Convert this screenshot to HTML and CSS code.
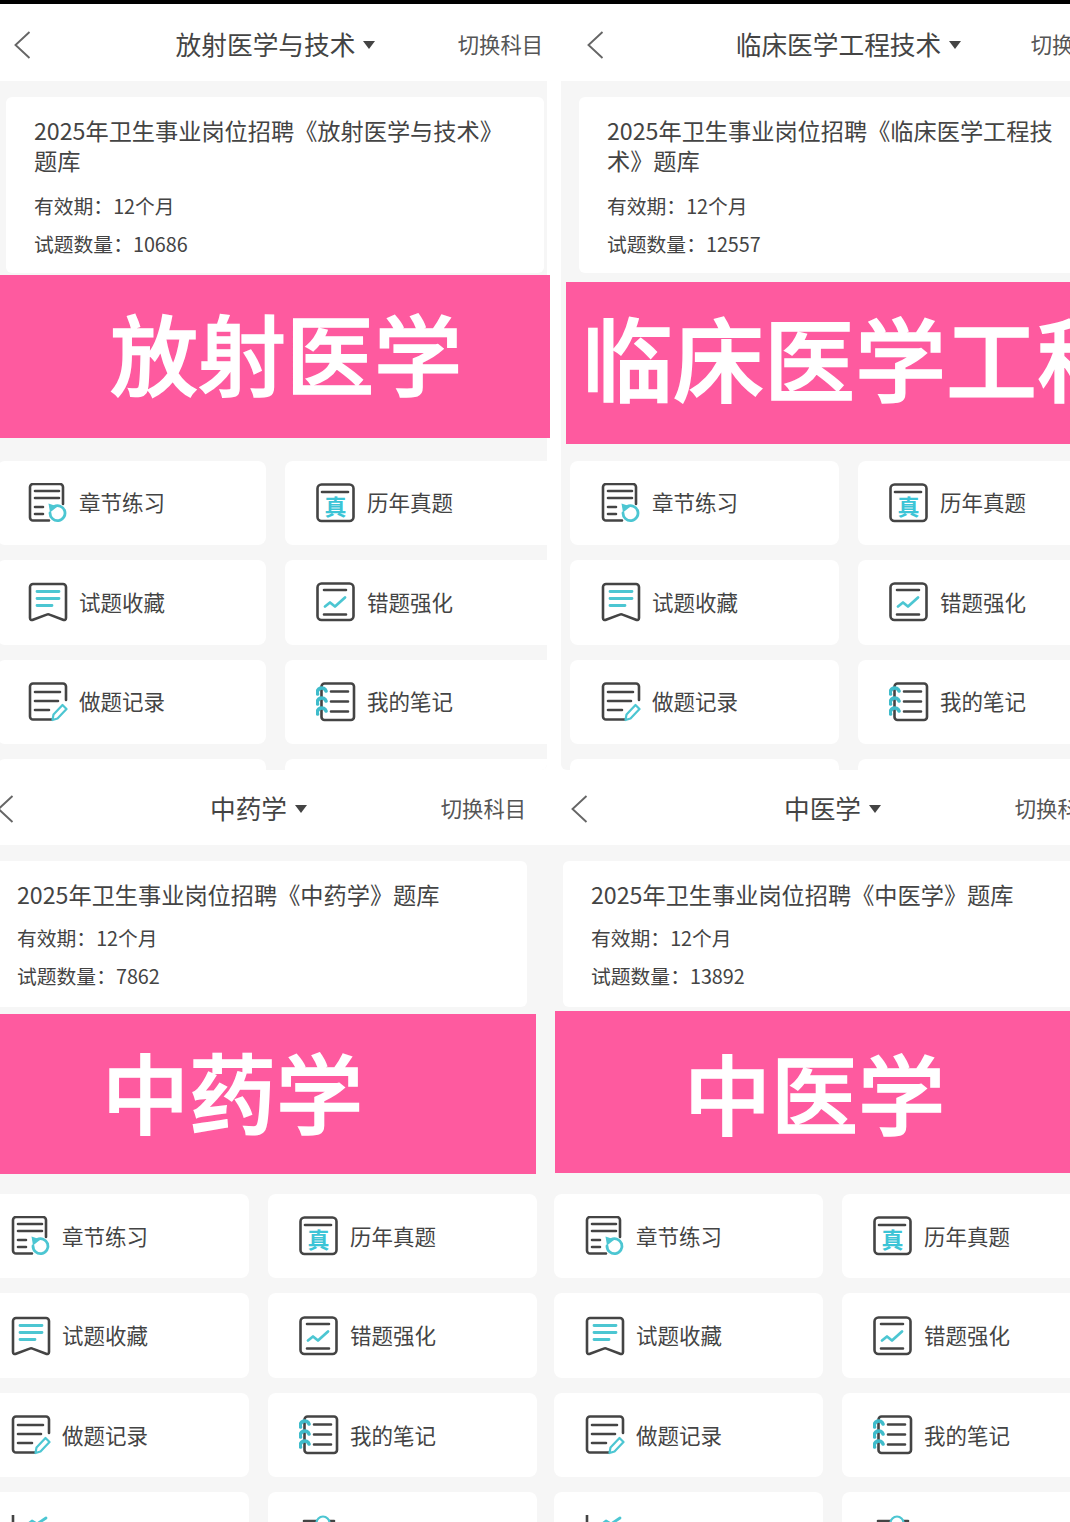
FILE: index.html
```html
<!DOCTYPE html>
<html lang="zh-CN">
<head>
<meta charset="utf-8">
<title>题库</title>
<link rel="stylesheet" href="styles.css">
</head>
<body>
<svg class="sprite" width="0" height="0" aria-hidden="true">
  <defs>
    <symbol id="i-chapter" viewBox="0 0 40 40">
      <path class="dk" d="M21 37.5H5a3 3 0 0 1-3-3V4a3 3 0 0 1 3-3h27a3 3 0 0 1 3 3v17"/>
      <path class="dk" d="M7 8h24M7 15h24M7 24h8M7 31h8"/>
      <path class="tl" d="M26 23.500A7.500 7.500 0 1 1 22 30"/>
      <path class="tf" d="M20.500 20.500l9 3-7.500 6z"/>
    </symbol>
    <symbol id="i-real" viewBox="0 0 40 40">
      <rect class="dk" x="1.500" y="1.500" width="36" height="36.500" rx="4"/>
      <path class="dk" d="M6 9h26"/>
      <text class="zhen" x="19.500" y="32">真</text>
    </symbol>
    <symbol id="i-fav" viewBox="0 0 40 40">
      <path class="dk" d="M2 5a3 3 0 0 1 3-3h30a3 3 0 0 1 3 3v31c0 1.600-1.500 2.500-3 1.800L21.500 32.600a3 3 0 0 0-2.800 0L5 37.800C3.500 38.500 2 37.600 2 36z"/>
      <path class="tl" d="M9 9.500h22M9 16.500h22M9 23.500h15"/>
    </symbol>
    <symbol id="i-wrong" viewBox="0 0 40 40">
      <rect class="dk" x="1.500" y="1.500" width="36" height="36.500" rx="4"/>
      <path class="dk" d="M8 8h22M8 32.500h22"/>
      <path class="tl" d="M9 24.500l5-4 5 4 10-9"/>
    </symbol>
    <symbol id="i-record" viewBox="0 0 40 40">
      <path class="dk" d="M24 37.500H5a3 3 0 0 1-3-3V4.500a3 3 0 0 1 3-3h30a3 3 0 0 1 3 3V18"/>
      <path class="dk" d="M7 10h25M7 19h23M7 28h14"/>
      <path class="tp" d="M24.500 38l1-5.500 9-9.500 4 4-9 9.500z"/>
    </symbol>
    <symbol id="i-note" viewBox="0 0 40 40">
      <rect class="dk" x="5.500" y="1.500" width="32.500" height="36.500" rx="3"/>
      <path class="dk" d="M15 9.500h17M15 19.500h17M15 29.500h17"/>
      <path class="th" d="M1.500 12a4.500 4.500 0 0 1 8.500-3M1.500 22a4.500 4.500 0 0 1 8.500-3M1.500 32a4.500 4.500 0 0 1 8.500-3"/>
    </symbol>
    <symbol id="i-stat" viewBox="0 0 40 40">
      <path class="dk" d="M2 0v38h36"/>
      <path class="tl" d="M16 10l5-4 5 3 9-6"/>
    </symbol>
    <symbol id="i-user" viewBox="0 0 40 40">
      <path class="dk" d="M5 6h30"/>
      <circle class="wf" cx="24" cy="8" r="6.500"/>
    </symbol>
  </defs>
</svg>

<main class="collage">
  <div class="topbar"></div>

  <section class="pane pane-c">
    <header class="head">
      <svg class="back" viewBox="0 0 17 28"><path d="M15.500 1L1.500 14l14 13"/></svg>
      <div class="subject">中药学<i class="caret"></i></div>
      <div class="switch">切换科目</div>
    </header>
    <div class="body">
      <div class="card">
        <h2 class="name">2025年卫生事业岗位招聘《中药学》题库</h2>
        <p class="meta">有效期：12个月</p>
        <p class="meta">试题数量：7862</p>
      </div>
      <div class="slot"></div>
      <div class="tiles">
        <div class="tile"><svg class="ico"><use href="#i-chapter"/></svg><span class="label">章节练习</span></div>
        <div class="tile"><svg class="ico"><use href="#i-real"/></svg><span class="label">历年真题</span></div>
        <div class="tile"><svg class="ico"><use href="#i-fav"/></svg><span class="label">试题收藏</span></div>
        <div class="tile"><svg class="ico"><use href="#i-wrong"/></svg><span class="label">错题强化</span></div>
        <div class="tile"><svg class="ico"><use href="#i-record"/></svg><span class="label">做题记录</span></div>
        <div class="tile"><svg class="ico"><use href="#i-note"/></svg><span class="label">我的笔记</span></div>
        <div class="tile"><svg class="ico"><use href="#i-stat"/></svg></div>
        <div class="tile"><svg class="ico"><use href="#i-user"/></svg></div>
      </div>
    </div>
  </section>

  <section class="pane pane-d">
    <header class="head">
      <svg class="back" viewBox="0 0 17 28"><path d="M15.500 1L1.500 14l14 13"/></svg>
      <div class="subject">中医学<i class="caret"></i></div>
      <div class="switch">切换科目</div>
    </header>
    <div class="body">
      <div class="card">
        <h2 class="name">2025年卫生事业岗位招聘《中医学》题库</h2>
        <p class="meta">有效期：12个月</p>
        <p class="meta">试题数量：13892</p>
      </div>
      <div class="slot"></div>
      <div class="tiles">
        <div class="tile"><svg class="ico"><use href="#i-chapter"/></svg><span class="label">章节练习</span></div>
        <div class="tile"><svg class="ico"><use href="#i-real"/></svg><span class="label">历年真题</span></div>
        <div class="tile"><svg class="ico"><use href="#i-fav"/></svg><span class="label">试题收藏</span></div>
        <div class="tile"><svg class="ico"><use href="#i-wrong"/></svg><span class="label">错题强化</span></div>
        <div class="tile"><svg class="ico"><use href="#i-record"/></svg><span class="label">做题记录</span></div>
        <div class="tile"><svg class="ico"><use href="#i-note"/></svg><span class="label">我的笔记</span></div>
        <div class="tile"><svg class="ico"><use href="#i-stat"/></svg></div>
        <div class="tile"><svg class="ico"><use href="#i-user"/></svg></div>
      </div>
    </div>
  </section>

  <section class="pane pane-a">
    <header class="head">
      <svg class="back" viewBox="0 0 17 28"><path d="M15.500 1L1.500 14l14 13"/></svg>
      <div class="subject">放射医学与技术<i class="caret"></i></div>
      <div class="switch">切换科目</div>
    </header>
    <div class="body">
      <div class="card">
        <h2 class="name">2025年卫生事业岗位招聘《放射医学与技术》题库</h2>
        <p class="meta">有效期：12个月</p>
        <p class="meta">试题数量：10686</p>
      </div>
      <div class="slot"></div>
      <div class="tiles">
        <div class="tile"><svg class="ico"><use href="#i-chapter"/></svg><span class="label">章节练习</span></div>
        <div class="tile"><svg class="ico"><use href="#i-real"/></svg><span class="label">历年真题</span></div>
        <div class="tile"><svg class="ico"><use href="#i-fav"/></svg><span class="label">试题收藏</span></div>
        <div class="tile"><svg class="ico"><use href="#i-wrong"/></svg><span class="label">错题强化</span></div>
        <div class="tile"><svg class="ico"><use href="#i-record"/></svg><span class="label">做题记录</span></div>
        <div class="tile"><svg class="ico"><use href="#i-note"/></svg><span class="label">我的笔记</span></div>
        <div class="tile"></div>
        <div class="tile"></div>
      </div>
    </div>
  </section>

  <section class="pane pane-b">
    <header class="head">
      <svg class="back" viewBox="0 0 17 28"><path d="M15.500 1L1.500 14l14 13"/></svg>
      <div class="subject">临床医学工程技术<i class="caret"></i></div>
      <div class="switch">切换科目</div>
    </header>
    <div class="body">
      <div class="card">
        <h2 class="name">2025年卫生事业岗位招聘《临床医学工程技术》题库</h2>
        <p class="meta">有效期：12个月</p>
        <p class="meta">试题数量：12557</p>
      </div>
      <div class="slot"></div>
      <div class="tiles">
        <div class="tile"><svg class="ico"><use href="#i-chapter"/></svg><span class="label">章节练习</span></div>
        <div class="tile"><svg class="ico"><use href="#i-real"/></svg><span class="label">历年真题</span></div>
        <div class="tile"><svg class="ico"><use href="#i-fav"/></svg><span class="label">试题收藏</span></div>
        <div class="tile"><svg class="ico"><use href="#i-wrong"/></svg><span class="label">错题强化</span></div>
        <div class="tile"><svg class="ico"><use href="#i-record"/></svg><span class="label">做题记录</span></div>
        <div class="tile"><svg class="ico"><use href="#i-note"/></svg><span class="label">我的笔记</span></div>
        <div class="tile"></div>
        <div class="tile"></div>
      </div>
    </div>
  </section>

  <div class="banner banner-a">放射医学</div>
  <div class="banner banner-b">临床医学工程</div>
  <div class="banner banner-c">中药学</div>
  <div class="banner banner-d">中医学</div>
</main>
</body>
</html>
```

FILE: styles.css
```css
* { box-sizing: border-box; }

html, body {
  margin: 0;
  padding: 0;
  background: #fff;
}

.sprite { position: absolute; }

.collage {
  position: relative;
  width: 1070px;
  height: 1522px;
  overflow: hidden;
  background: #fff;
  font-family: "Noto Sans CJK SC", "Noto Sans", sans-serif;
  color: #444;
}

.topbar {
  height: 4px;
  background: #000;
}

/* The four screenshots sit on a free canvas */
.pane {
  position: absolute;
  overflow: hidden;
  display: flex;
  flex-direction: column;
  padding-top: 5px;
}
.pane-a { left: -12px; top: 4px; width: 559px; height: 766px; border-radius: 0 0 6px 6px; }
.pane-b { left: 561px; top: 4px; width: 576px; height: 766px; border-radius: 0 0 6px 6px; }
.pane-c { left: -29px; top: 768px; width: 575px; height: 754px; }
.pane-d { left: 545px; top: 768px; width: 576px; height: 754px; }

.head {
  flex: none;
  width: 576px;
  height: 72px;
  padding: 0 21px 0 20px;
  display: grid;
  grid-template-columns: 1fr auto 1fr;
  align-items: center;
  background: #fff;
}
.back {
  width: 17px;
  height: 28px;
  margin-left: 5.500px;
  fill: none;
  stroke: #666;
  stroke-width: 1.900;
}
.subject {
  display: flex;
  align-items: center;
  gap: 8px;
  margin-bottom: 2px;
  font-size: 25.700px;
  line-height: 36px;
  white-space: nowrap;
}
.caret {
  width: 0;
  height: 0;
  margin-top: 2px;
  border-left: 6px solid transparent;
  border-right: 6px solid transparent;
  border-top: 8px solid #444;
}
.switch {
  justify-self: end;
  margin-bottom: 2px;
  font-size: 21.300px;
  line-height: 30px;
  color: #555;
  white-space: nowrap;
}

.body {
  flex: 1;
  width: 576px;
  padding-top: 16px;
  background: #f6f6f6;
}
.card {
  width: 538px;
  margin-left: 18px;
  padding: 18px 44px 10px 28px;
  background: #fff;
  border-radius: 6px;
}
.name {
  margin: 0 0 12px;
  font-size: 23.200px;
  font-weight: 400;
  line-height: 30px;
}
.pane-c .card, .pane-d .card { padding-bottom: 12px; }
.pane-c .name, .pane-d .name { margin-bottom: 10px; }
.meta {
  margin: 0;
  font-size: 19.800px;
  line-height: 38px;
}
.slot { height: 187.700px; }
.pane-c .slot, .pane-d .slot { height: 186.900px; }

.tiles {
  margin-left: 9px;
  display: grid;
  grid-template-columns: 269px 269px;
  grid-auto-rows: 84.500px;
  column-gap: 19px;
  row-gap: 15px;
}
.tile {
  display: flex;
  align-items: center;
  gap: 11px;
  padding-left: 31px;
  background: #fff;
  border-radius: 8px;
  font-size: 21.500px;
}
.label { margin-bottom: 2px; }
.ico {
  flex: none;
  width: 40px;
  height: 40px;
}

/* icon strokes */
.dk, .tl, .tp, .th { fill: none; stroke-linecap: round; stroke-linejoin: round; }
.dk { stroke: #444; stroke-width: 2.600; }
.tl { stroke: #4cc6d2; stroke-width: 2.800; }
.tp { stroke: #4cc6d2; stroke-width: 2.200; }
.th { stroke: #3fbccb; stroke-width: 3.600; }
.tf { fill: #4cc6d2; }
.wf { fill: #fff; stroke: #4cc6d2; stroke-width: 2.200; }
.zhen {
  fill: #3cc4d6;
  font-family: "Noto Sans CJK SC", sans-serif;
  font-size: 22px;
  font-weight: 700;
  text-anchor: middle;
}

/* Pink title strips pasted over the screenshots */
.banner {
  position: absolute;
  z-index: 2;
  display: flex;
  align-items: center;
  background: #fe5a9f;
  color: #fff;
  font-weight: 500;
  -webkit-text-stroke: 1.500px #fff;
  line-height: 1;
  white-space: nowrap;
  overflow: hidden;
}
.banner-a { left: 0; top: 275px; width: 550px; height: 163px; padding: 0 0 12px 110px; font-size: 88px; }
.banner-b { left: 566px; top: 282px; width: 504px; height: 162px; padding: 0 0 16px 16px; font-size: 91px; }
.banner-c { left: 0; top: 1014px; width: 536px; height: 160px; padding: 0 0 8px 102px; font-size: 87px; }
.banner-d { left: 555px; top: 1011px; width: 515px; height: 162px; padding: 0 0 2px 129px; font-size: 87px; }
```
